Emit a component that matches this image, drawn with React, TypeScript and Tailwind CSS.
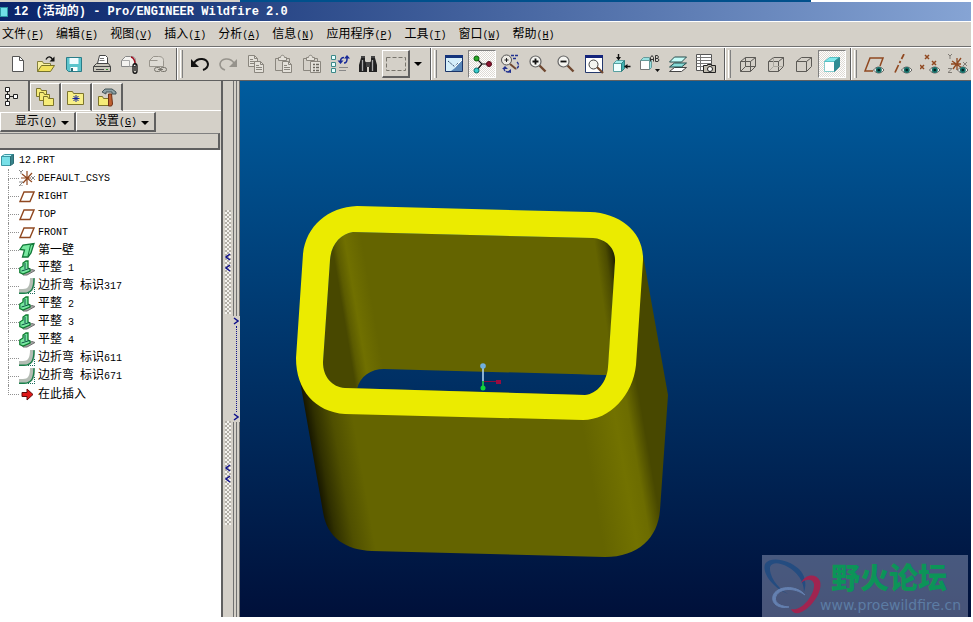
import type { ReactNode } from 'react'
import { clsx } from 'clsx'

type TreeIcon = 'csys' | 'plane' | 'wall' | 'flat' | 'bend' | 'insert'

const MENUS = [
  ['文件', 'F'],
  ['编辑', 'E'],
  ['视图', 'V'],
  ['插入', 'I'],
  ['分析', 'A'],
  ['信息', 'N'],
  ['应用程序', 'P'],
  ['工具', 'T'],
  ['窗口', 'W'],
  ['帮助', 'H'],
]

const FEATURES: { icon: TreeIcon; name: string }[] = [
  { icon: 'csys', name: 'DEFAULT_CSYS' },
  { icon: 'plane', name: 'RIGHT' },
  { icon: 'plane', name: 'TOP' },
  { icon: 'plane', name: 'FRONT' },
  { icon: 'wall', name: '第一壁' },
  { icon: 'flat', name: '平整 1' },
  { icon: 'bend', name: '边折弯 标识317' },
  { icon: 'flat', name: '平整 2' },
  { icon: 'flat', name: '平整 3' },
  { icon: 'flat', name: '平整 4' },
  { icon: 'bend', name: '边折弯 标识611' },
  { icon: 'bend', name: '边折弯 标识671' },
  { icon: 'insert', name: '在此插入' },
]

/** Latin runs are set a step smaller so that one glyph is half a Han glyph wide. */
function Mixed({ text }: { text: string }) {
  return (
    <span className="whitespace-pre">
      {text.split(/([\x20-\x7e]+)/).map((part, i) =>
        i % 2 ? (
          <span key={i} className="text-[10px]">
            {part}
          </span>
        ) : (
          part
        ),
      )}
    </span>
  )
}

function Accel({ label, letter }: { label: string; letter: string }) {
  return (
    <span className="whitespace-nowrap">
      {label}
      <span className="text-[10px]">
        (<u>{letter}</u>)
      </span>
    </span>
  )
}

function Svg({ children }: { children: ReactNode }) {
  return (
    <svg viewBox="0 0 20 20" className="size-5 shrink-0" fill="none" stroke="#222" aria-hidden="true">
      {children}
    </svg>
  )
}

function Tool({ label, pressed, children }: { label: string; pressed?: boolean; children: ReactNode }) {
  return (
    <button
      type="button"
      aria-label={label}
      className={clsx(
        'flex size-7 shrink-0 items-center justify-center',
        pressed &&
          'border border-t-[#808080] border-r-white border-b-white border-l-[#808080] bg-[repeating-conic-gradient(#ffffff_0_25%,#dedad4_0_50%)] bg-[length:2px_2px]',
      )}
    >
      <Svg>{children}</Svg>
    </button>
  )
}

function ToolGroup({ first, children }: { first?: boolean; children: ReactNode }) {
  return (
    <div className={clsx('flex shrink-0 items-center', first ? 'px-1' : 'border-l border-[#606060] pr-1')}>
      {!first && (
        <span className="mr-[3px] flex self-stretch border-l border-white pl-0.5">
          <span className="my-0.5 w-[3px] border-l border-r border-l-white border-r-[#808080]" />
        </span>
      )}
      {children}
    </div>
  )
}

function Pages({ x, y }: { x: number; y: number }) {
  return (
    <g transform={`translate(${x} ${y})`} stroke="#8a867e">
      <path d="M.5 .5h6l3 3v8h-9z" fill="#e4e1da" />
      <path d="M6.5 .5v3h3M2 4.500h3M2 6.500h6M2 8.500h6" />
    </g>
  )
}

function Clipboard() {
  return (
    <>
      <path d="M4 4.500H1.500v12H9M13 4.500h2.500V8" stroke="#8a867e" />
      <path d="M4.500 6.500v-3h2c0-3 4-3 4 0h2v3z" fill="#e4e1da" stroke="#8a867e" />
    </>
  )
}

function Eye() {
  return (
    <g stroke="none">
      <path d="M9.500 16c3-4 7.500-4 10.500 0c-3 4-7.500 4-10.500 0z" fill="#f4f4f0" stroke="#444" strokeWidth=".8" />
      <circle cx="14.800" cy="16" r="3" fill="#16706a" />
      <circle cx="14.800" cy="16" r="1.300" fill="#022" />
    </g>
  )
}

function Lens({ sign }: { sign: 'plus' | 'minus' }) {
  return (
    <>
      <path d="M11.500 11.500l6 6" stroke="#704830" strokeWidth="2.400" />
      <circle cx="7.500" cy="7.500" r="5.500" fill="#f4f4f0" stroke="#666" strokeWidth="1.200" />
      <path d={sign === 'plus' ? 'M4.500 7.500h6M7.500 4.500v6' : 'M4.500 7.500h6'} stroke="#111" strokeWidth="1.800" />
    </>
  )
}

function WireCube({ hidden }: { hidden?: ReactNode }) {
  return (
    <g stroke="#5c5a56">
      <path d="M2.500 7.500h10v10h-10zM2.500 7.500l5-4h10l-5 4M17.500 3.500v9l-5 5" />
      {hidden}
    </g>
  )
}

function FileTools() {
  return (
    <ToolGroup first>
      <Tool label="新建">
        <path d="M4.500 2.500h7l4 4v11h-11z" fill="#fff" stroke="#555" />
        <path d="M11.500 2.500v4h4" stroke="#555" />
      </Tool>
      <Tool label="打开">
        <path d="M1.500 17.500v-10h5l1 2h7v2" fill="#f8f0a0" stroke="#85803c" />
        <path d="M1.500 17.500l4-6h13l-4 6z" fill="#f2e25c" stroke="#76722c" />
        <path d="M10 5.500c2-4 5-3 6.500 0" stroke="#111" strokeWidth="1.400" />
        <path d="M18.500 2.500v5h-5z" fill="#111" stroke="none" />
      </Tool>
      <Tool label="保存">
        <path d="M2.500 3.500h15v14h-13l-2-2z" fill="#5cc4cc" stroke="#2a7c88" />
        <path d="M5.500 4h9v6h-9z" fill="#f0fbff" stroke="none" />
        <path d="M6.500 13h7v4h-7z" fill="#fff" stroke="none" />
        <path d="M7 14h2v3h-2z" fill="#2a6c78" stroke="none" />
      </Tool>
      <Tool label="打印">
        <path d="M5.500 9.500l2-8h6l2 2v6" fill="#fff" stroke="#444" />
        <path d="M8 4.500h4M7.500 6.500h5" stroke="#777" />
        <path d="M1.500 12.500l3-3h12l2 3v5h-17z" fill="#c8c5ba" stroke="#444" />
        <path d="M1.500 12.500h17M4 15.500h8" stroke="#444" />
        <path d="M14 15.500h2" stroke="#2a8a2a" />
      </Tool>
      <Tool label="邮寄">
        <path d="M1.500 12.500v-6l4-4h5c4 0 5 2 5 4v6z" fill="#f4f3f0" stroke="#888" />
        <path d="M1.500 6.500h8v6" stroke="#aaa" />
        <path d="M11 3c3 1 4 3 4 7" stroke="#a01020" strokeWidth="1.500" />
        <path d="M13 17v-5c0-3 4-3 4 0v5c0 3-4 3-4 0M15 12v5" stroke="#111" strokeWidth="1.300" />
      </Tool>
      <Tool label="发送链接">
        <path d="M1.500 12.500v-6l4-4h5c4 0 5 2 5 4v6z" fill="#dedbd4" stroke="#99958d" />
        <path d="M1.500 6.500h8" stroke="#99958d" />
        <rect x="6.500" y="13.500" width="6" height="4" rx="2" stroke="#77746c" />
        <rect x="12.500" y="13.500" width="6" height="4" rx="2" stroke="#77746c" />
        <path d="M10 15.500h5" stroke="#77746c" />
      </Tool>
    </ToolGroup>
  )
}

function EditTools() {
  return (
    <ToolGroup>
      <Tool label="撤消">
        <path d="M4 9c4-6 13-5 14 1c0 3-2 5-5 6" stroke="#111" strokeWidth="2" />
        <path d="M1 5v8h8z" fill="#111" stroke="none" />
      </Tool>
      <Tool label="重做">
        <path d="M16 9c-4-6-13-5-14 1c0 3 2 5 5 6" stroke="#96938c" strokeWidth="1.600" />
        <path d="M19 5v8h-8z" fill="#96938c" stroke="none" />
      </Tool>
      <Tool label="复制">
        <Pages x={2} y={1} />
        <Pages x={8} y={7} />
      </Tool>
      <Tool label="粘贴">
        <Clipboard />
        <Pages x={8} y={7} />
      </Tool>
      <Tool label="选择性粘贴">
        <Clipboard />
        <path d="M8.500 7.500h10v11h-10z" fill="#e4e1da" stroke="#8a867e" />
        <path d="M11 10.500h2M14 10.500h3M11 13.500h2M14 13.500h3M11 16.500h2M14 16.500h3" stroke="#6a675f" strokeWidth="1.400" />
      </Tool>
      <Tool label="再生">
        <g fill="#e6ffff" stroke="#3c8888">
          <path d="M1.500 1.500h4v4h-4zM1.500 8.500h4v4h-4zM1.500 14.500h4v4h-4z" />
        </g>
        <path d="M9 13.500h9M9 16.500h7" stroke="#888" />
        <path d="M10.500 7.500c0-3 1-4 3.500-4M17 4v1c0 3-1 4-3 4" stroke="#182a98" strokeWidth="1.500" />
        <path d="M7.500 6.500h6l-3 3.500zM14 4.500h6l-3-3.500z" fill="#182a98" stroke="none" />
      </Tool>
      <Tool label="查找">
        <path d="M3 4h4v3l2 3v8H1v-7zM13 4h4l2 7v7h-8v-8l2-3z" fill="#222" stroke="none" />
        <path d="M8 8h4v5H8zM3 2h4v2H3zM13 2h4v2h-4z" fill="#444" stroke="none" />
        <path d="M4.500 6v11M14.500 6v11" stroke="#aaa" strokeWidth="1.300" />
      </Tool>
      <button
        type="button"
        aria-label="选取框"
        className="flex size-7 items-center justify-center border-t border-r-2 border-b-2 border-l border-t-white border-r-[#606060] border-b-[#606060] border-l-white"
      >
        <Svg>
          <rect x=".5" y="3.500" width="19" height="13" stroke="#77746c" strokeDasharray="4 2" />
        </Svg>
      </button>
      <button type="button" aria-label="选取选项" className="flex w-4 justify-center">
        <Triangle />
      </button>
    </ToolGroup>
  )
}

function Triangle() {
  return (
    <svg viewBox="0 0 8 4" className="h-1 w-2 shrink-0" aria-hidden="true">
      <path d="M0 0h8L4 4z" fill="#000" />
    </svg>
  )
}

function ViewTools() {
  return (
    <ToolGroup>
      <Tool label="重画">
        <path d="M1.500 1.500h17v16h-17z" fill="#d4eefa" stroke="#1a3468" />
        <path d="M1 1h18v3H1z" fill="#14347c" stroke="none" />
        <path d="M7 17l4-3l7-8v11z" fill="#5a88b8" stroke="none" />
        <path d="M4 7l7 6l3-4" stroke="#304868" strokeDasharray="2 1" />
        <path d="M11 13l7-7" stroke="#fff" />
      </Tool>
      <Tool label="旋转中心" pressed>
        <path d="M5 5l5 5l-5 6M10 10h8" stroke="#111" strokeWidth="1.200" />
        <circle cx="4.500" cy="4.500" r="2.500" fill="#28a828" stroke="#0b5c0b" />
        <circle cx="4.500" cy="16.500" r="2.500" fill="#38cccc" stroke="#0b7070" />
        <circle cx="17" cy="10" r="2.500" fill="#8c1430" stroke="#500818" />
      </Tool>
      <Tool label="定向模式">
        <circle cx="6.500" cy="6" r="5" fill="#eceae4" stroke="#555" />
        <path d="M6.500 4v4M4.500 6h4" stroke="#222" />
        <path d="M10 10l6 5" stroke="#704830" strokeWidth="2" />
        <path d="M11 1.500h7M13 4.500h4M17 8c3 3 1 6-1 7M4 14c0 3 2 4 5 4" stroke="#203090" strokeWidth="1.400" strokeDasharray="3 1" />
        <path d="M5 12l3 3H2zM11 15v4l-4-1z" fill="#203090" stroke="none" />
      </Tool>
      <Tool label="放大">
        <Lens sign="plus" />
      </Tool>
      <Tool label="缩小">
        <Lens sign="minus" />
      </Tool>
      <Tool label="重新调整">
        <path d="M1.500 1.500h17v17h-17z" fill="#fff" stroke="#24386c" />
        <path d="M1 1h18v3H1z" fill="#14247c" stroke="none" />
        <path d="M13 13l6 6" stroke="#704830" strokeWidth="2.200" />
        <circle cx="9.500" cy="10.500" r="4.500" fill="#f4f4f0" stroke="#444" />
      </Tool>
      <Tool label="重定向">
        <path d="M1.500 9.500h8v8h-8z" fill="#f0ffff" stroke="#58a0a0" />
        <path d="M1.500 9.500l3-3h8l-3 3z" fill="#a0ecec" stroke="#58a0a0" />
        <path d="M9.500 9.500l3-3v8l-3 3z" fill="#40b0b0" stroke="#308080" />
        <path d="M6.500 0v4M18.500 12.500h-4" stroke="#111" strokeWidth="1.400" />
        <path d="M4 3h5l-2.500 3.500zM15.500 10v5L12 12.500z" fill="#111" stroke="none" />
      </Tool>
      <Tool label="已命名的视图">
        <path d="M.5 6.500h9v9h-9z" fill="#fff" stroke="#777" />
        <path d="M.5 6.500l3-3h6v3zM9.500 6.500h2v7l-2 2z" fill="#98e0e0" stroke="#679a9a" />
        <path
          d="M10.500 7.500v-4l1.500-2l1.500 2v4M10.500 5.500h3M15.500 1.500v6h2.500l1-1.500l-1-1.500h-2.500h2l1-1.500l-1-1.500z"
          stroke="#333"
        />
        <path d="M15 15h5l-2.500 3z" fill="#111" stroke="none" />
      </Tool>
      <Tool label="层">
        <path d="M1.500 17.500l5-4h12l-5 4z" fill="#fff" stroke="#444" />
        <path d="M1.500 13l5-4h12l-5 4z" fill="#88dcd8" stroke="#244c4c" />
        <path d="M1.500 8l5-5h12l-5 5z" fill="#c4fcf8" stroke="#244c4c" />
      </Tool>
      <Tool label="视图管理器">
        <path d="M.5 .5h15v16H.5z" fill="#fff" stroke="#555" />
        <path d="M.5 3.500h15M.5 6.500h15M.5 9.500h15M.5 12.500h15M4.500 .5v16" stroke="#777" />
        <path d="M7.500 11.500h4v-1h4v1h4v7h-12z" fill="#c0bcb0" stroke="#222" />
        <circle cx="14" cy="15" r="2.500" fill="#fff" stroke="#222" />
      </Tool>
    </ToolGroup>
  )
}

function DisplayTools() {
  return (
    <ToolGroup>
      <Tool label="线框">
        <WireCube hidden={<path d="M7.500 3.500v9h10M7.500 12.500l-5 5" />} />
      </Tool>
      <Tool label="隐藏线">
        <WireCube hidden={<path d="M7.500 3.500v9h10M7.500 12.500l-5 5" stroke="#aaa79f" />} />
      </Tool>
      <Tool label="无隐藏线">
        <WireCube />
      </Tool>
      <Tool label="着色" pressed>
        <path d="M2.500 7.500h10v10h-10z" fill="#fff" stroke="#8cc" />
        <path d="M2.500 7.500l5-4h10l-5 4z" fill="#80e8ec" stroke="#58c0c4" />
        <path d="M12.500 7.500l5-4v9l-5 5z" fill="#308c94" stroke="#308c94" />
      </Tool>
    </ToolGroup>
  )
}

function DatumTools() {
  return (
    <ToolGroup>
      <Tool label="基准平面显示">
        <path d="M9 17H1L6 4h13l-3 8" stroke="#904820" strokeWidth="1.500" />
        <Eye />
      </Tool>
      <Tool label="基准轴显示">
        <path d="M12 0L9.500 5M8.500 7l-1 2M6.500 11L3 18.500" stroke="#904820" strokeWidth="1.700" />
        <Eye />
      </Tool>
      <Tool label="基准点显示">
        <path d="M5 1l4 4M9 1L5 5M0 11l4 4M4 11l-4 4M12 7l4 4M16 7l-4 4" stroke="#904820" strokeWidth="1.500" />
        <Eye />
      </Tool>
      <Tool label="坐标系显示">
        <path d="M4 7l10 7M9 4v12M13 4L5 15M3 10h10" stroke="#904820" strokeWidth="1.300" />
        <path d="M0 0l2 2l2-2M2 2v3M15 8l4 4M19 8l-4 4M0 14.500h4l-4 4h4" stroke="#807c76" />
        <Eye />
      </Tool>
    </ToolGroup>
  )
}

function Tab({ label, active, children }: { label: string; active?: boolean; children: ReactNode }) {
  return (
    <button
      type="button"
      role="tab"
      aria-selected={!!active}
      aria-label={label}
      className={clsx(
        'flex items-center border-r-2 border-r-[#606060]',
        active
          ? 'w-[30px] pl-0.5'
          : 'mt-0.5 w-[31px] justify-center border-t border-b border-l border-t-white border-b-white border-l-white',
      )}
    >
      <Svg>{children}</Svg>
    </button>
  )
}

function DropButton({ label, letter, className }: { label: string; letter: string; className: string }) {
  return (
    <button
      type="button"
      className={clsx(
        'flex h-5 items-center gap-1 border-t border-r-2 border-b-2 border-l border-t-white border-r-[#606060] border-b-[#606060] border-l-white pt-0.5',
        className,
      )}
    >
      <Accel label={label} letter={letter} />
      <Triangle />
    </button>
  )
}

function FeatureIcon({ icon }: { icon: TreeIcon }) {
  return (
    <svg viewBox="0 0 16 16" className="size-4 shrink-0" fill="none" aria-hidden="true">
      {icon === 'csys' && (
        <>
          <path d="M3 4l10 8M8 1v14M13 3L4 13M2 8h10" stroke="#904820" strokeWidth="1.200" />
          <path d="M0 0l2 2l2-2M2 2v2M12 6l4 4M16 6l-4 4M0 12h4l-4 4h4" stroke="#888" />
        </>
      )}
      {icon === 'plane' && <path d="M1 13.500L5 4h10l-4 9.500z" stroke="#904820" strokeWidth="1.400" />}
      {icon === 'wall' && (
        <>
          <path d="M1 7.500L4 3l11-1.500L12 11l-3 4H3.500L5.500 8z" fill="#78e8a0" stroke="#107838" strokeWidth="1.300" />
          <path d="M15 2l-3.500 1L9 14" stroke="#107838" />
        </>
      )}
      {icon === 'flat' && (
        <>
          <path d="M4 13l9-3.500l3 1L8 15H4z" fill="#a8a8a8" stroke="#707070" />
          <path d="M.8 12.500V8L4 6V3l3-2h2v7l2 1v2l-7 3z" fill="#78e8a0" stroke="#0e7c30" strokeWidth="1.300" />
          <path d="M2.500 11l8-2.500M6 3v6" stroke="#105048" />
        </>
      )}
      {icon === 'bend' && (
        <>
          <path d="M0 15v-4h4c5 0 7-3 7-11h5v4c0 8-4 11-9 11z" fill="#b4bcb4" />
          <path d="M0 15.300h5c7 0 10-4 10-15" stroke="#18804a" strokeWidth="1.400" />
          <path d="M9 15.500h7M15.500 9v6" stroke="#1a6a5a" strokeDasharray="1 1" />
        </>
      )}
      {icon === 'insert' && <path d="M3 6.500h5V3l6 5.500L8 14v-3.500H3z" fill="#e01818" stroke="#600c0c" />}
    </svg>
  )
}

function ModelTree() {
  return (
    <div className="min-h-0 grow bg-white pt-px">
      <div className="flex h-[18px] items-center gap-1">
        <svg viewBox="0 0 15 16" className="h-4 w-[15px] shrink-0" aria-hidden="true">
          <path d="M1.500 4.500h9v9h-9z" fill="#78e0e8" stroke="#3c98a4" />
          <path d="M1.500 4.500l3-2h9l-3 2z" fill="#b8f8fc" stroke="#3c98a4" />
          <path d="M10.500 4.500l3-2v9l-3 2z" fill="#38848c" stroke="#2c6c74" />
        </svg>
        <Mixed text="12.PRT" />
      </div>
      <ul className="pl-2">
        {FEATURES.map((f, i) => (
          <li key={i} className="flex h-[18px] items-center">
            <span className="flex w-[11px] flex-col self-stretch">
              <span className="h-2.5 border-b border-l border-dotted border-[#909090]" />
              {i < FEATURES.length - 1 && <span className="grow border-l border-dotted border-[#909090]" />}
            </span>
            <FeatureIcon icon={f.icon} />
            <span className="pt-px pl-[3px]">
              <Mixed text={f.name} />
            </span>
          </li>
        ))}
      </ul>
    </div>
  )
}

function Chevron({ right }: { right?: boolean }) {
  return (
    <svg viewBox="0 0 6 8" className="h-2 w-1.5 shrink-0" fill="none" aria-hidden="true">
      <path d={right ? 'M1 1l4 3l-4 3' : 'M5 1L1 4l4 3'} stroke="#10108c" strokeWidth="1.500" />
    </svg>
  )
}

function Grip({ label }: { label: string }) {
  return (
    <button
      type="button"
      aria-label={label}
      className="flex h-[104px] w-1.5 flex-col items-center justify-center gap-[3px] bg-[repeating-conic-gradient(#f4f2ee_0_25%,#b4b0a8_0_50%)] bg-[length:4px_4px]"
    >
      <Chevron />
      <Chevron />
    </button>
  )
}

function Navigator() {
  return (
    <aside className="flex w-[240px] shrink-0 bg-[#d4d0c8]">
      <div className="flex min-w-0 grow flex-col border-r-2 border-[#606060]">
        <div role="tablist" className="flex h-[30px] items-stretch">
          <Tab label="模型树" active>
            <path d="M3.500 1.500h4v4h-4zM3.500 8.500h4v4h-4zM11.500 8.500h4v4h-4zM3.500 15.500h4v4h-4z" fill="#fff" />
            <path d="M5.500 6v2M5.500 13v2M8 10.500h3" />
          </Tab>
          <Tab label="文件夹浏览器">
            <g fill="#f6ec78" stroke="#7c742c">
              <path d="M1.500 9.500v-8h4l1 2h5v6z" />
              <path d="M4.500 13.500v-8h4l1 2h5v6z" />
              <path d="M8.500 18.500v-9h4l1 2h5v7z" />
            </g>
          </Tab>
          <Tab label="收藏夹">
            <path d="M1.500 17.500v-13h5l1 2h10v11z" fill="#f8f088" stroke="#7c742c" />
            <path d="M10 8v7M6.500 11.500h7M7.500 9l5 5M12.500 9l-5 5" stroke="#1828a0" />
          </Tab>
          <Tab label="连接">
            <path d="M1.500 18.500v-9h4l1 2h5v7z" fill="#f6ec78" stroke="#7c742c" />
            <path d="M5 5l3-3h7l4 3v2h-4v-2H9v2z" fill="#8ca0a4" stroke="#445458" />
            <path d="M11.500 7h3l1 10l-1 2h-3z" fill="#c06030" stroke="#703014" />
          </Tab>
          <span className="grow border-b border-white" />
        </div>
        <div className="flex pt-px">
          <DropButton label="显示" letter="O" className="w-[76px] pl-[14px]" />
          <DropButton label="设置" letter="G" className="w-20 pl-[18px]" />
        </div>
        <div className="mt-px mr-px h-[17px] shrink-0 border-t border-r-2 border-b-2 border-t-[#808080] border-r-[#606060] border-b-[#606060]" />
        <ModelTree />
      </div>
      <div className="flex w-[10px] flex-col items-center gap-[107px] pt-[129px]">
        <Grip label="收起导航器" />
        <Grip label="收起导航器" />
      </div>
      <div className="flex w-[7px] flex-col">
        <span className="h-[235px] border-r border-l border-[#707070] px-0.5">
          <span className="block h-full border-l border-[#707070]" />
        </span>
        <span className="py-px">
          <Chevron right />
        </span>
        <span className="ml-[3px] h-[86px] border-l border-dotted border-[#10108c]" />
        <span className="py-px">
          <Chevron right />
        </span>
        <span className="grow border-r border-l border-[#707070] px-0.5">
          <span className="block h-full border-l border-[#707070]" />
        </span>
      </div>
    </aside>
  )
}

function Model() {
  return (
    <svg viewBox="240 81 731 536" className="block h-full w-full" aria-label="12.PRT">
      <defs>
        <linearGradient id="body" gradientUnits="userSpaceOnUse" x1="300" y1="390" x2="635" y2="332">
          <stop offset="0" stopColor="#121200" />
          <stop offset=".03" stopColor="#303000" />
          <stop offset=".08" stopColor="#505000" />
          <stop offset=".14" stopColor="#646400" />
          <stop offset=".8" stopColor="#646400" />
          <stop offset=".9" stopColor="#727200" />
          <stop offset=".94" stopColor="#6c6c00" />
          <stop offset=".98" stopColor="#484800" />
        </linearGradient>
        <linearGradient id="inner-left" gradientUnits="userSpaceOnUse" x1="334" y1="258" x2="364" y2="253">
          <stop offset="0" stopColor="#484800" />
          <stop offset=".15" stopColor="#5c5c00" />
          <stop offset=".45" stopColor="#707000" />
          <stop offset="1" stopColor="#646400" />
        </linearGradient>
        <linearGradient id="inner-right" gradientUnits="userSpaceOnUse" x1="594" y1="240" x2="622" y2="236">
          <stop offset="0" stopColor="#646400" />
          <stop offset=".35" stopColor="#4c4c00" />
          <stop offset=".7" stopColor="#181800" />
        </linearGradient>
        <clipPath id="opening">
          <path d="M353 232L593 238C606 239 616 248 615 262L608 367C607 382 597 394 585 395L345 388C332 387 323 377 323 362L330 260C331 245 340 234 353 232Z" />
        </clipPath>
      </defs>
      <path
        d="M296 358L323 512C327 538 346 550 372 551L605 557C638 557 658 538 660 510L668 395L643 255L608 367C607 382 597 394 585 395L345 388C332 387 323 377 323 362Z"
        fill="url(#body)"
      />
      <g clipPath="url(#opening)">
        <path d="M300 220H640V376L608 375L384 369C371 369 360 376 357 389L300 400Z" fill="url(#inner-left)" />
        <path d="M580 220H640V376L608 375L580 374Z" fill="url(#inner-right)" />
      </g>
      <path
        fillRule="evenodd"
        fill="#ebeb00"
        d="M357 206L590 212C620 213 644 232 643 260L636 365C633 395 610 420 583 420L345 414C315 412 296 390 296 358L303 254C306 226 328 207 357 206ZM353 232L593 238C606 239 616 248 615 262L608 367C607 382 597 394 585 395L345 388C332 387 323 377 323 362L330 260C331 245 340 234 353 232Z"
      />
      <path d="M483 381V367" stroke="#b8dcf8" strokeWidth="1.500" />
      <path d="M483 381V388" stroke="#20d840" strokeWidth="1.500" />
      <path d="M484 381.500H498" stroke="#880c3c" />
      <circle cx="483" cy="366" r="2.800" fill="#70b0e0" />
      <circle cx="483" cy="388" r="2.500" fill="#10d838" />
      <path d="M496 380h5v4h-5z" fill="#980c40" />
    </svg>
  )
}

function Watermark() {
  return (
    <div className="absolute right-[3px] bottom-0 flex h-[62px] w-[206px] bg-[#b4bcd8]/40">
      <svg viewBox="0 0 60 62" className="h-[62px] w-[60px] shrink-0" aria-hidden="true">
        <path
          fillRule="evenodd"
          fill="#244c80"
          d="M26 39C10 32 0 18 3 9C8 1 26 4 37 14C43 20 45 29 42 37C42 26 35 17 26 12C17 7 10 7 8 12C7 20 14 32 26 39Z"
        />
        <path
          fillRule="evenodd"
          fill="#a02450"
          d="M39 28C43 19 54 18 58 26C61 37 49 54 37 58C33 59 30 57 29 54C39 57 53 40 52 29C51 24 45 23 39 28Z"
        />
        <path
          d="M43 40C34 29 14 31 11 41C9 49 17 54 27 52C15 51 12 46 14 41C18 33 32 32 43 40Z"
          fill="#6480b0"
          stroke="#6480b0"
        />
      </svg>
      <div className="flex min-w-0 flex-col whitespace-nowrap">
        <span className="pl-[9px] font-['Noto_Sans_CJK_SC',sans-serif] text-[29px] leading-[42px] font-black text-[#0c9458]">
          野火论坛
        </span>
        <span className="-ml-0.5 font-['DejaVu_Sans',sans-serif] text-[14px] leading-4 text-[#5c7ca4]">
          www.proewildfire.cn
        </span>
      </div>
    </div>
  )
}

export default function App() {
  return (
    <div className="h-screen bg-white pr-0.5 pb-[5px]">
      <div className="flex h-full flex-col overflow-hidden font-['Liberation_Mono','Noto_Sans_CJK_SC',monospace] text-[12px] leading-[18px] text-black">
        <div className="flex h-0.5 shrink-0">
          <span className="w-[240px] bg-[#d4d0c8]" />
          <span className="grow bg-[#00508c]" />
          <span className="w-40 bg-white" />
        </div>
        <header className="flex h-[19px] shrink-0 items-center gap-1.5 bg-linear-to-r from-[#0a246a] to-[#86a4d4] text-white">
          <span className="h-2.5 w-2 border border-[#2c98a4] bg-[#70e0e8]" />
          <h1 className="font-bold whitespace-nowrap">12 (活动的) - Pro/ENGINEER Wildfire 2.0</h1>
        </header>
        <nav className="flex h-[25px] shrink-0 items-center gap-3 border-t border-white bg-[#d4d0c8] pt-0.5 pl-0.5">
          {MENUS.map(([label, letter]) => (
            <button key={letter} type="button">
              <Accel label={label} letter={letter} />
            </button>
          ))}
        </nav>
        <div className="h-[35px] shrink-0 border-t border-b border-t-[#707070] border-b-[#606060]">
          <div role="toolbar" className="flex h-full overflow-hidden border-t border-white bg-[#d4d0c8]">
            <FileTools />
            <EditTools />
            <ViewTools />
            <DisplayTools />
            <DatumTools />
          </div>
        </div>
        <div className="flex min-h-0 grow">
          <Navigator />
          <main className="relative min-w-0 grow bg-linear-to-b from-[#005c9e] to-[#00103a]">
            <Model />
            <Watermark />
          </main>
        </div>
      </div>
    </div>
  )
}
